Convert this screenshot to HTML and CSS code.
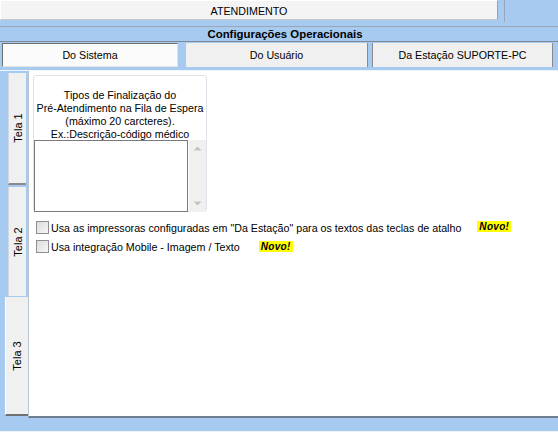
FILE: index.html
```html
<!DOCTYPE html>
<html>
<head>
<meta charset="utf-8">
<link rel="stylesheet" href="styles.css">
</head>
<body>
<div class="app">
  <div class="top">
    <div class="hdr">ATENDIMENTO</div>
    <div class="hdr-line"></div>
  </div>
  <div class="title">Configurações Operacionais</div>
  <div class="tabs">
    <div class="tab sel">Do Sistema</div>
    <div class="tab t2">Do Usuário</div>
    <div class="tab t3">Da Estação SUPORTE-PC</div>
  </div>
  <div class="main">
    <div class="vtabs">
      <div class="vtab v1"><span>Tela 1</span></div>
      <div class="vtab v2"><span>Tela 2</span></div>
      <div class="vtab v3"><span>Tela 3</span></div>
    </div>
    <div class="panel">
      <div class="group">
        <div class="gtext">Tipos de Finalização do<br>Pré-Atendimento na Fila de Espera<br>(máximo 20 carcteres).<br>Ex.:Descrição-código médico</div>
        <div class="memo">
          <div class="memo-box"></div>
          <div class="sb">
            <svg width="9" height="5" viewBox="0 0 9 5"><path d="M0.5 4.5 L4.5 0.5 L8.5 4.5 Z" fill="#c4c4c4"/></svg>
            <svg width="9" height="5" viewBox="0 0 9 5"><path d="M0.5 0.5 L4.5 4.5 L8.5 0.5 Z" fill="#c4c4c4"/></svg>
          </div>
        </div>
      </div>
      <div class="chk-row r1">
        <span class="box"></span>
        <span class="lbl">Usa as impressoras configuradas em "Da Estação" para os textos das teclas de atalho</span>
        <span class="novo n1">Novo!</span>
      </div>
      <div class="chk-row r2">
        <span class="box"></span>
        <span class="lbl">Usa integração Mobile - Imagem / Texto</span>
        <span class="novo n2">Novo!</span>
      </div>
    </div>
  </div>
  <div class="bottom"></div>
</div>
</body>
</html>
```
FILE: styles.css
```css
html, body {
  margin: 0;
  padding: 0;
}
body {
  width: 558px;
  height: 432px;
  overflow: hidden;
  background: #a6caf0;
  font-family: "Liberation Sans", Arial, sans-serif;
  font-size: 10.7px;
  color: #000;
}
.app {
  width: 558px;
  height: 432px;
  display: flex;
  flex-direction: column;
}
.top {
  display: flex;
  height: 21px;
}
.hdr {
  width: 496px;
  background: #f4f4f4;
  border-top: 1px solid #ffffff;
  border-left: 1px solid #ffffff;
  border-right: 1px solid #a0a0a0;
  border-bottom: 1px solid #c8c8c8;
  display: flex;
  align-items: center;
  justify-content: center;
  padding-top: 1px;
  height: 17px;
}
.hdr-line {
  margin-left: 6px;
  width: 1px;
  height: 22px;
  background: #9aa8b8;
}
.title {
  margin-top: 5px;
  height: 13px;
  border-top: 1px solid #9ba7b4;
  border-bottom: 1px solid #7f8a96;
  font-weight: bold;
  font-size: 11.4px;
  display: flex;
  align-items: center;
  justify-content: center;
  padding-bottom: 1px;
  padding-left: 12px;
}
.tabs {
  display: flex;
  height: 24px;
  margin-top: 1px;
  padding-left: 2px;
}
.tab {
  display: flex;
  align-items: center;
  justify-content: center;
  background: #f0f0f0;
  box-sizing: border-box;
  height: 24px;
}
.tab.sel {
  width: 176px;
  background: #fbfbfb;
  border-top: 1px solid #6e6e6e;
  border-left: 1px solid #6e6e6e;
  border-right: 1px solid #e4e4e4;
  border-bottom: 1px solid #e4e4e4;
}
.tab.t2 {
  margin-left: 8px;
  width: 182px;
  border-right: 1px solid #8a8a8a;
}
.tab.t3 {
  margin-left: 4px;
  width: 181px;
  border-left: 1px solid #8a8a8a;
  border-right: 1px solid #8a8a8a;
}
.main {
  margin-top: 3px;
  border-top: 1px solid #eef4fb;
  display: flex;
  height: 349px;
}
.vtabs {
  width: 28px;
  display: flex;
  flex-direction: column;
}
.vtab {
  display: flex;
  align-items: center;
  justify-content: center;
  background: #f0f0f0;
  box-sizing: border-box;
  font-size: 11px;
}
.vtab span {
  display: block;
  transform: rotate(-90deg);
  white-space: nowrap;
}
.v1 {
  margin: 2px 2px 0 8px;
  height: 112px;
  border-bottom: 2px solid #8a8a8a;
  border-left: 1px solid #d0d8e0;
}
.v2 {
  margin: 2px 2px 0 8px;
  height: 109px;
  border-left: 1px solid #d0d8e0;
}
.v3 {
  margin: 1px 0 0 5px;
  height: 119px;
  background: #f0f0f0;
  border-bottom: 2px solid #707070;
  border-left: 1px solid #ffffff;
}
.panel {
  flex: 1;
  background: #ffffff;
  border-left: 1px solid #b8c4d0;
  border-bottom: 2px solid #6f7f90;
  height: 347px;
  padding: 4px 0 0 4px;
  box-sizing: border-box;
  display: flex;
  flex-direction: column;
}
.group {
  width: 174px;
  height: 137px;
  border: 1px solid #dde3e8;
  border-radius: 3px;
  box-sizing: border-box;
  display: flex;
  flex-direction: column;
}
.gtext {
  text-align: center;
  line-height: 13px;
  padding-top: 13px;
  height: 51px;
  white-space: nowrap;
}
.memo {
  display: flex;
  height: 72px;
}
.memo-box {
  width: 155px;
  height: 72px;
  box-sizing: border-box;
  border: 1px solid #7a7a7a;
  background: #fff;
}
.sb {
  width: 17px;
  margin-left: 1px;
  background: #f0f0f0;
  display: flex;
  flex-direction: column;
  align-items: center;
  justify-content: space-between;
  padding: 6px 0 6px;
  box-sizing: border-box;
}
.chk-row {
  display: flex;
  align-items: center;
  height: 19px;
  padding-left: 3px;
}
.chk-row.r1 {
  margin-top: 6px;
}
.box {
  width: 11px;
  height: 11px;
  border: 1px solid #8f8f8f;
  background: linear-gradient(135deg, #dcdcdc, #f6f6f6);
  margin-right: 2px;
  flex: none;
}
.lbl {
  white-space: nowrap;
}
.novo {
  background: #ffff00;
  font-weight: bold;
  font-style: italic;
  font-size: 10px;
  padding: 0 2px;
  line-height: 11px;
  letter-spacing: 0.3px;
}
.n1 {
  margin-left: 16px;
  margin-top: -2px;
}
.n2 {
  margin-left: 19px;
  margin-top: 0;
}
.bottom {
  flex: 1;
  border-bottom: 1px solid #f0f4f8;
}
```
